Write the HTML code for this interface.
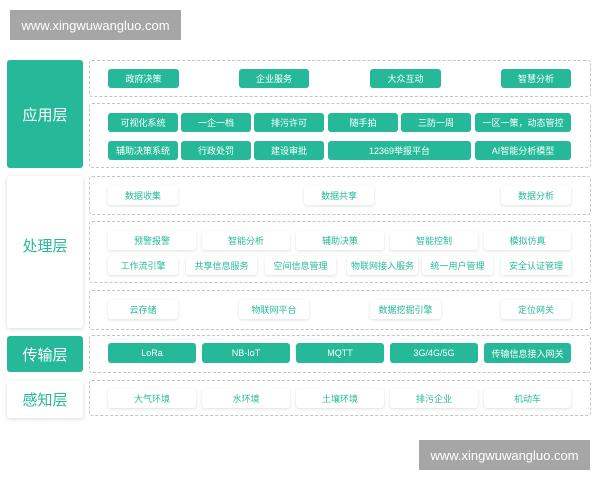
<!DOCTYPE html>
<html><head><meta charset="utf-8"><style>
*{margin:0;padding:0;box-sizing:border-box}
body{width:600px;height:480px;background:#fff;position:relative;overflow:hidden;font-family:"Liberation Sans","Noto Sans CJK SC",sans-serif}
.a{position:absolute}
.wm{background:#a6a6a6;color:#fff;font-size:13px;display:flex;align-items:center;justify-content:center}
.lab{border-radius:3px;display:flex;align-items:center;justify-content:center;font-size:15px}
.lt{background:#26b999;color:#fff}
.lw{background:#fff;color:#26b999;box-shadow:0 1px 4px rgba(0,0,0,.15)}
.box{border:1px dashed #c4c4c4;border-radius:3px}
.b{border-radius:3px;display:flex;align-items:center;justify-content:center;font-size:9px;white-space:nowrap}
.t{background:#26b999;color:#fff}
.w{background:#fff;color:#26b999;box-shadow:0 1px 3px rgba(0,0,0,.13)}
</style></head><body>
<div class="a wm" style="left:10px;top:10px;width:171px;height:30px">www.xingwuwangluo.com</div>
<div class="a wm" style="left:419px;top:440px;width:171px;height:30px">www.xingwuwangluo.com</div>

<div class="a lab lt" style="left:7px;top:60px;width:76px;height:108px">应用层</div>
<div class="a box" style="left:89px;top:60px;width:502px;height:37px"></div>
<div class="a b t" style="left:108px;top:69px;width:71px;height:19px">政府决策</div>
<div class="a b t" style="left:239px;top:69px;width:70px;height:19px">企业服务</div>
<div class="a b t" style="left:370px;top:69px;width:71px;height:19px">大众互动</div>
<div class="a b t" style="left:501px;top:69px;width:70px;height:19px">智慧分析</div>
<div class="a box" style="left:89px;top:103px;width:502px;height:65px"></div>
<div class="a b t" style="left:108px;top:113px;width:70px;height:19px">可视化系统</div>
<div class="a b t" style="left:181px;top:113px;width:70px;height:19px">一企一档</div>
<div class="a b t" style="left:254px;top:113px;width:70px;height:19px">排污许可</div>
<div class="a b t" style="left:328px;top:113px;width:70px;height:19px">随手拍</div>
<div class="a b t" style="left:401px;top:113px;width:70px;height:19px">三防一周</div>
<div class="a b t" style="left:475px;top:113px;width:96px;height:19px">一区一策，动态管控</div>
<div class="a b t" style="left:108px;top:141px;width:70px;height:19px">辅助决策系统</div>
<div class="a b t" style="left:181px;top:141px;width:70px;height:19px">行政处罚</div>
<div class="a b t" style="left:254px;top:141px;width:70px;height:19px">建设审批</div>
<div class="a b t" style="left:328px;top:141px;width:143px;height:19px">12369举报平台</div>
<div class="a b t" style="left:475px;top:141px;width:96px;height:19px">AI智能分析模型</div>

<div class="a lab lw" style="left:7px;top:176px;width:76px;height:152px;padding-bottom:14px">处理层</div>
<div class="a box" style="left:89px;top:176px;width:502px;height:39px"></div>
<div class="a b w" style="left:108px;top:186px;width:70px;height:19px">数据收集</div>
<div class="a b w" style="left:304px;top:186px;width:70px;height:19px">数据共享</div>
<div class="a b w" style="left:501px;top:186px;width:70px;height:19px">数据分析</div>
<div class="a box" style="left:89px;top:221px;width:502px;height:62px"></div>
<div class="a b w" style="left:108px;top:231px;width:88px;height:19px">预警报警</div>
<div class="a b w" style="left:202px;top:231px;width:88px;height:19px">智能分析</div>
<div class="a b w" style="left:296px;top:231px;width:88px;height:19px">辅助决策</div>
<div class="a b w" style="left:390px;top:231px;width:88px;height:19px">智能控制</div>
<div class="a b w" style="left:484px;top:231px;width:87px;height:19px">模拟仿真</div>
<div class="a b w" style="left:108px;top:256px;width:70px;height:19px">工作流引擎</div>
<div class="a b w" style="left:186px;top:256px;width:71px;height:19px">共享信息服务</div>
<div class="a b w" style="left:265px;top:256px;width:71px;height:19px">空间信息管理</div>
<div class="a b w" style="left:347px;top:256px;width:71px;height:19px">物联网接入服务</div>
<div class="a b w" style="left:422px;top:256px;width:71px;height:19px">统一用户管理</div>
<div class="a b w" style="left:501px;top:256px;width:70px;height:19px">安全认证管理</div>
<div class="a box" style="left:89px;top:290px;width:502px;height:40px"></div>
<div class="a b w" style="left:108px;top:300px;width:70px;height:19px">云存储</div>
<div class="a b w" style="left:239px;top:300px;width:70px;height:19px">物联网平台</div>
<div class="a b w" style="left:370px;top:300px;width:71px;height:19px">数据挖掘引擎</div>
<div class="a b w" style="left:501px;top:300px;width:70px;height:19px">定位网关</div>

<div class="a lab lt" style="left:7px;top:336px;width:76px;height:36px">传输层</div>
<div class="a box" style="left:89px;top:335px;width:502px;height:38px"></div>
<div class="a b t" style="left:108px;top:343px;width:88px;height:20px">LoRa</div>
<div class="a b t" style="left:202px;top:343px;width:88px;height:20px">NB-IoT</div>
<div class="a b t" style="left:296px;top:343px;width:88px;height:20px">MQTT</div>
<div class="a b t" style="left:390px;top:343px;width:88px;height:20px">3G/4G/5G</div>
<div class="a b t" style="left:484px;top:343px;width:87px;height:20px">传输信息接入网关</div>

<div class="a lab lw" style="left:7px;top:381px;width:76px;height:37px">感知层</div>
<div class="a box" style="left:89px;top:380px;width:502px;height:36px"></div>
<div class="a b w" style="left:108px;top:389px;width:88px;height:19px">大气环境</div>
<div class="a b w" style="left:202px;top:389px;width:88px;height:19px">水环境</div>
<div class="a b w" style="left:296px;top:389px;width:88px;height:19px">土壤环境</div>
<div class="a b w" style="left:390px;top:389px;width:88px;height:19px">排污企业</div>
<div class="a b w" style="left:484px;top:389px;width:87px;height:19px">机动车</div>
</body></html>
